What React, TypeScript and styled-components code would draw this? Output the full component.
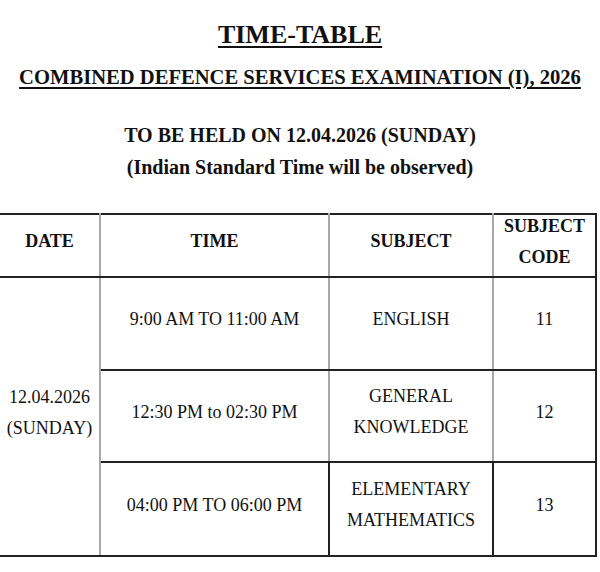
import { FC } from "react";
import styled, { createGlobalStyle } from "styled-components";

const serif = `"Liberation Serif", "Times New Roman", serif`;

const GlobalStyle = createGlobalStyle`
  html, body {
    margin: 0;
    padding: 0;
    background: #fff;
  }
  body, table, th, td, h1, h2, p, div {
    font-family: ${serif};
    color: #111;
  }
`;

const Page = styled.div`
  width: 600px;
  height: 572px;
  overflow: hidden;
  background: #fff;
`;

const Heading = styled.header`
  display: flex;
  flex-direction: column;
  align-items: center;
  padding-top: 18px;
`;

const Title = styled.h1`
  margin: 0;
  font-family: ${serif};
  font-size: 26px;
  line-height: 34px;
  font-weight: bold;
  text-decoration: underline;
  text-underline-offset: 3px;
  text-decoration-thickness: 2px;
`;

const SubTitle = styled.h2`
  margin: 12px 0 0;
  font-family: ${serif};
  font-size: 20.6px;
  line-height: 26px;
  font-weight: bold;
  text-decoration: underline;
  text-underline-offset: 3px;
  text-decoration-thickness: 2px;
`;

const Note = styled.p<{ $gap?: number }>`
  margin: ${(p) => p.$gap ?? 0}px 0 0;
  font-family: ${serif};
  font-size: 20px;
  line-height: 32px;
  font-weight: bold;
`;

const Table = styled.table`
  margin-top: 30px;
  width: 596px;
  border-collapse: collapse;
  table-layout: fixed;
  font-family: ${serif};
`;

const Th = styled.th<{ $last?: boolean }>`
  height: 61px;
  padding: 0;
  font-family: ${serif};
  font-size: 18px;
  line-height: 31px;
  font-weight: bold;
  text-align: center;
  vertical-align: middle;
  border-top: 2px solid #222;
  border-bottom: 2px solid #222;
  border-right: 2px solid ${(p) => (p.$last ? "#222" : "#a8a8a8")};
`;

const Td = styled.td<{ $line?: string; $dark?: boolean; $h?: number }>`
  height: ${(p) => (p.$h ?? 90) - 8}px;
  padding: 0 0 8px;
  font-family: ${serif};
  font-size: 18px;
  line-height: 31px;
  text-align: center;
  vertical-align: middle;
  border-bottom: 2px solid #222;
  border-top: 2px solid ${(p) => p.$line ?? "#222"};
  border-right: 2px solid ${(p) => (p.$dark ? "#222" : "#a8a8a8")};
`;

const DateCell = styled(Td)`
  border-right: 2px solid #a8a8a8;
`;

// header text sits a little above the middle of its cell
const HeadText = styled.div`
  margin-top: -8px;
`;

interface Row {
  time: string;
  subject: string[];
  code: string;
  h: number;
}

const rows: Row[] = [
  { time: "9:00 AM TO 11:00 AM", subject: ["ENGLISH"], code: "11", h: 91 },
  { time: "12:30 PM to 02:30 PM", subject: ["GENERAL", "KNOWLEDGE"], code: "12", h: 90 },
  { time: "04:00 PM TO 06:00 PM", subject: ["ELEMENTARY", "MATHEMATICS"], code: "13", h: 92 },
];

const Lines: FC<{ items: string[] }> = ({ items }) => (
  <>
    {items.map((t, i) => (
      <div key={i}>{t}</div>
    ))}
  </>
);

const heads = [["DATE"], ["TIME"], ["SUBJECT"], ["SUBJECT", "CODE"]];

export default function App() {
  return (
    <Page>
      <GlobalStyle />
      <Heading>
        <Title>TIME-TABLE</Title>
        <SubTitle>COMBINED DEFENCE SERVICES EXAMINATION (I), 2026</SubTitle>
        <Note $gap={29}>TO BE HELD ON 12.04.2026 (SUNDAY)</Note>
        <Note>(Indian Standard Time will be observed)</Note>
      </Heading>
      <Table>
        <colgroup>
          <col style={{ width: 100 }} />
          <col style={{ width: 229 }} />
          <col style={{ width: 164 }} />
          <col style={{ width: 103 }} />
        </colgroup>
        <thead>
          <tr>
            {heads.map((h, i) => (
              <Th key={i} $last={i === heads.length - 1}>
                <HeadText>
                  <Lines items={h} />
                </HeadText>
              </Th>
            ))}
          </tr>
        </thead>
        <tbody>
          {rows.map((r, i) => {
            const dark = i === 2;
            const line = i === 1 ? "#555" : "#222";
            return (
              <tr key={r.code}>
                {i === 0 && (
                  <DateCell rowSpan={3} $h={90}>
                    <Lines items={["12.04.2026", "(SUNDAY)"]} />
                  </DateCell>
                )}
                <Td $line={line} $dark={dark} $h={r.h}>
                  {r.time}
                </Td>
                <Td $line={line} $dark={dark} $h={r.h}>
                  <Lines items={r.subject} />
                </Td>
                <Td $line={line} $dark $h={r.h}>
                  {r.code}
                </Td>
              </tr>
            );
          })}
        </tbody>
      </Table>
    </Page>
  );
}
